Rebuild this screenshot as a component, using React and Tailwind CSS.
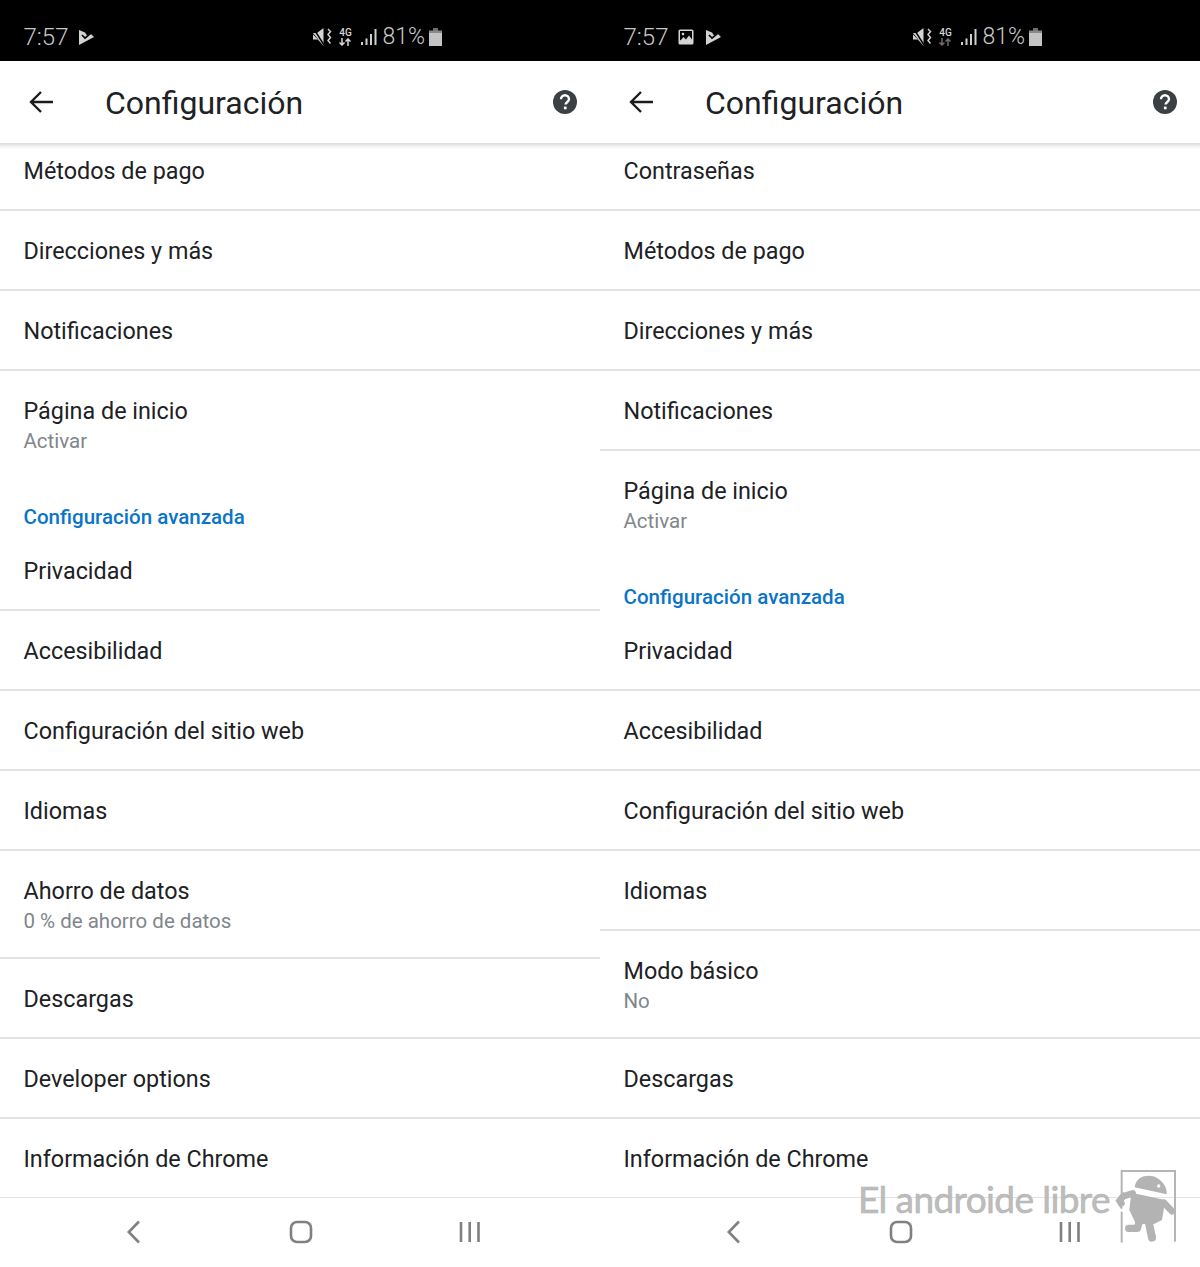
const FONT = { fontFamily: 'Roboto, sans-serif' };

function Vibrate() {
  return (
    <svg width="19" height="18" viewBox="0 0 19 18" className="shrink-0">
      <path d="M0 5h4L10.5 0v18L0 5z" fill="#d4d4d4" />
      <path d="M0 6.5v5h4.5l5.5 5z" fill="#d4d4d4" />
      <path d="M0.5 0.5L11 17" stroke="#000" strokeWidth="1.4" />
      <path d="M15 1l2.5 2.5-2.5 3 2.5 3-2.5 3 2.5 3" stroke="#cfcfcf" strokeWidth="1.5" fill="none" />
    </svg>
  );
}

function Net({ dim }) {
  const c = dim ? '#6e6e6e' : '#d8d8d8';
  return (
    <div className="flex w-[14px] flex-col items-center shrink-0">
      <span className="text-[10px] leading-[10px] font-medium text-[#d8d8d8]">4G</span>
      <svg width="14" height="8" viewBox="0 0 14 8">
        <path d="M4 0v7M1.5 4.5L4 7l2.5-2.5" stroke={c} strokeWidth="1.5" fill="none" />
        <path d="M10 8V1M7.5 3.5L10 1l2.5 2.5" stroke={c} strokeWidth="1.5" fill="none" />
      </svg>
    </div>
  );
}

function Signal() {
  return (
    <svg width="16" height="16" viewBox="0 0 16 16" className="shrink-0">
      <rect x="0" y="13" width="2" height="3" fill="#cfcfcf" />
      <rect x="4.5" y="9.5" width="2" height="6.5" fill="#cfcfcf" />
      <rect x="9" y="5" width="2" height="11" fill="#cfcfcf" />
      <rect x="13.5" y="0" width="2" height="16" fill="#cfcfcf" />
    </svg>
  );
}

function Battery() {
  return (
    <svg width="13" height="18" viewBox="0 0 13 18" className="shrink-0">
      <rect x="4" y="0" width="5" height="3" fill="#6f6f6f" />
      <rect x="0" y="2.5" width="13" height="3" fill="#8a8a8a" />
      <rect x="0" y="5" width="13" height="13" fill="#c4c4c4" />
    </svg>
  );
}

function AppNotif() {
  return (
    <svg width="15" height="15" viewBox="0 0 15 15" className="shrink-0">
      <path d="M0 0L6 2.5 8 5.5 11.5 3.5 15 7 0 15z" fill="#d2d2d2" />
      <path d="M3 5l3 3.2 6-5" stroke="#000" strokeWidth="1.7" fill="none" />
    </svg>
  );
}

function Gallery() {
  return (
    <svg width="16" height="16" viewBox="0 0 16 16" className="shrink-0">
      <rect x="0.5" y="0.5" width="15" height="15" rx="1.5" fill="#d4d4d4" />
      <rect x="2" y="2" width="12" height="9.5" fill="#000" />
      <circle cx="5" cy="5" r="1.3" fill="#d4d4d4" />
      <path d="M2 12l3.5-4 2.5 2.5 3-4 3 4V12z" fill="#d4d4d4" />
    </svg>
  );
}

function StatusBar({ gallery, dimNet }) {
  return (
    <div className="flex h-[61px] shrink-0 items-center bg-black pt-[13px] pl-[23.5px] pr-[158px] text-[#c9c9c9]">
      <span className="w-[41.5px] text-[24px] font-light leading-[28px]">7:57</span>
      {gallery ? (
        <div className="ml-[13px] flex items-center gap-[12px]">
          <Gallery />
          <AppNotif />
        </div>
      ) : (
        <div className="ml-[14px]">
          <AppNotif />
        </div>
      )}
      <div className="ml-auto flex items-center">
        <Vibrate />
        <div className="ml-[6px]">
          <Net dim={dimNet} />
        </div>
        <div className="ml-[9px]">
          <Signal />
        </div>
        <span className="ml-[5px] text-[23px] font-light leading-[28px]">81%</span>
        <div className="ml-[4px]">
          <Battery />
        </div>
      </div>
    </div>
  );
}

function Header() {
  return (
    <div className="relative z-10 -mx-[8px] flex h-[82px] shrink-0 items-center bg-white pl-[37px] pr-[31px] shadow-[0_2px_5px_rgba(0,0,0,0.18)]">
      <svg width="24" height="24" viewBox="0 0 24 24" className="shrink-0">
        <path d="M24 12H2M12 2L2 12l10 10" stroke="#1c1c1c" strokeWidth="2.4" fill="none" />
      </svg>
      <span className="ml-[52px] pt-[2px] text-[32px] leading-[40px] text-[#202124]">Configuración</span>
      <svg width="24" height="24" viewBox="0 0 24 24" className="ml-auto shrink-0">
        <circle cx="12" cy="12" r="12" fill="#3c4043" />
        <path d="M8 9.3a4 4 0 0 1 8 0c0 2.6-3.4 2.8-3.4 5.3" stroke="#fff" strokeWidth="2.4" fill="none" />
        <rect x="10.9" y="16.6" width="2.7" height="2.7" fill="#fff" />
      </svg>
    </div>
  );
}

function Row({ title, sub, first, plain }) {
  const size = first
    ? 'h-[68px] justify-end pb-[24px]'
    : sub
      ? 'h-[108px] justify-start pt-[26px]'
      : 'h-[80px] justify-center pt-[2px]';
  const border = plain ? 'border-b-2 border-transparent' : 'border-b-2 border-[#e3e3e3]';
  return (
    <div className={`flex shrink-0 flex-col pl-[23.5px] ${size} ${border}`}>
      <div className="text-[23.35px] leading-[28px] text-[#202124]">{title}</div>
      {sub && <div className="mt-[2px] text-[20.5px] leading-[28px] text-[#80868b]">{sub}</div>}
    </div>
  );
}

function Section({ children }) {
  return (
    <div className="flex h-[52px] shrink-0 items-end pl-[23.5px] text-[20.55px] font-medium leading-[28px] text-[#0b74c8]">
      {children}
    </div>
  );
}

function NavBar() {
  return (
    <div className="flex h-[69px] shrink-0 items-center bg-white pb-[1px] pl-[127px]">
      <svg width="13" height="24" viewBox="0 0 13 24" className="shrink-0">
        <path d="M12 1.5L1.8 12 12 22.5" stroke="#808080" strokeWidth="2.6" fill="none" />
      </svg>
      <svg width="24" height="24" viewBox="0 0 24 24" className="ml-[149px] shrink-0">
        <rect x="2" y="2" width="20" height="20" rx="6" stroke="#808080" strokeWidth="2.6" fill="none" />
      </svg>
      <svg width="22" height="24" viewBox="0 0 22 24" className="ml-[146px] shrink-0">
        <path d="M2 2v20M10.7 2v20M19.5 2v20" stroke="#808080" strokeWidth="2.6" fill="none" />
      </svg>
    </div>
  );
}

function Watermark() {
  return (
    <div className="pointer-events-none absolute left-[258px] top-[1160px] z-20 flex h-[95px] items-start">
      <span
        className="mt-[15px] w-[262px] whitespace-nowrap text-[37px] leading-[48px] tracking-[-0.6px] text-[#b4b4b4]/90 [-webkit-text-stroke:0.6px_#b4b4b4]"
        style={{ fontFamily: 'Lato, sans-serif' }}
      >
        El androide libre
      </span>
      <svg width="90" height="95" viewBox="0 0 270 285" className="-ml-[20px] shrink-0">
        <path d="M65 110V33H225V245" stroke="#b5b5b5" strokeWidth="6" fill="none" />
        <path d="M65 155V248" stroke="#b5b5b5" strokeWidth="6" fill="none" />
        <path d="M72 98L50 122l16 24" stroke="#b5b5b5" strokeWidth="6" fill="none" />
        <path d="M104 82C108 45 150 42 170 53c20 11 32 30 30 50z" fill="#b3b3b3" />
        <circle cx="176" cy="78" r="5" fill="#fff" />
        <path d="M94 98L196 120 186 180 162 192 108 192 88 150z" fill="#b3b3b3" />
        <path d="M98 100L72 108c-8 4-14 14-8 22" stroke="#b3b3b3" strokeWidth="20" strokeLinecap="round" fill="none" />
        <path d="M192 128l24 26" stroke="#b3b3b3" strokeWidth="20" strokeLinecap="round" />
        <path d="M118 185l-6 20-26 0" stroke="#b3b3b3" strokeWidth="22" strokeLinecap="round" strokeLinejoin="round" fill="none" />
        <path d="M146 185l10 48" stroke="#b3b3b3" strokeWidth="24" strokeLinecap="round" />
      </svg>
    </div>
  );
}

function Panel({ gallery, dimNet, children, watermark }) {
  return (
    <div className="relative flex h-[1267px] w-[600px] shrink-0 flex-col overflow-hidden bg-white" style={FONT}>
      <StatusBar gallery={gallery} dimNet={dimNet} />
      <Header />
      <div className="flex min-h-0 flex-1 flex-col overflow-hidden">{children}</div>
      <NavBar />
      {watermark && <Watermark />}
    </div>
  );
}

export default function App() {
  return (
    <div className="flex h-[1267px] w-[1200px] overflow-hidden bg-white">
      <Panel>
        <Row first title="Métodos de pago" />
        <Row title="Direcciones y más" />
        <Row title="Notificaciones" />
        <Row plain title="Página de inicio" sub="Activar" />
        <Section>Configuración avanzada</Section>
        <Row title="Privacidad" />
        <Row title="Accesibilidad" />
        <Row title="Configuración del sitio web" />
        <Row title="Idiomas" />
        <Row title="Ahorro de datos" sub="0 % de ahorro de datos" />
        <Row title="Descargas" />
        <Row title="Developer options" />
        <Row title="Información de Chrome" />
      </Panel>
      <Panel gallery dimNet watermark>
        <Row first title="Contraseñas" />
        <Row title="Métodos de pago" />
        <Row title="Direcciones y más" />
        <Row title="Notificaciones" />
        <Row plain title="Página de inicio" sub="Activar" />
        <Section>Configuración avanzada</Section>
        <Row title="Privacidad" />
        <Row title="Accesibilidad" />
        <Row title="Configuración del sitio web" />
        <Row title="Idiomas" />
        <Row title="Modo básico" sub="No" />
        <Row title="Descargas" />
        <Row title="Información de Chrome" />
      </Panel>
    </div>
  );
}
